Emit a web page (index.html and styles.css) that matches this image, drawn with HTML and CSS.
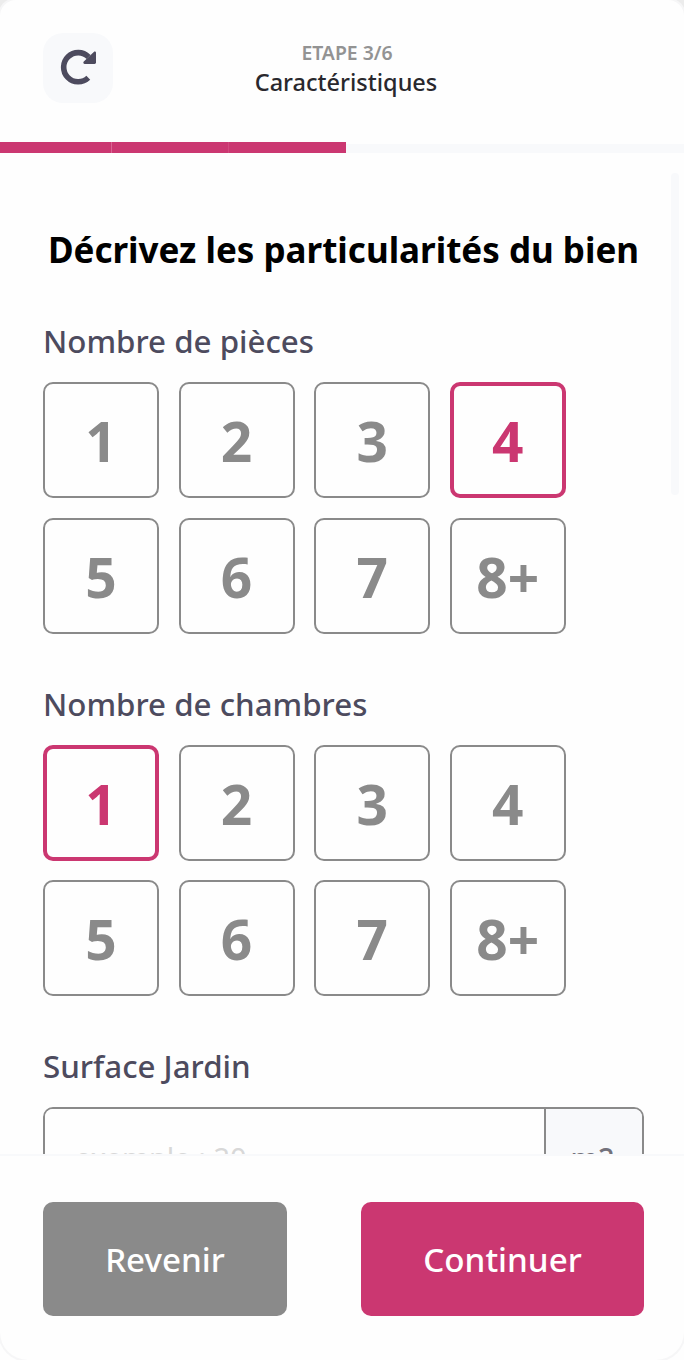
FILE: index.html
```html
<!DOCTYPE html>
<html lang="fr">
<head>
    <meta charset="UTF-8">
    <meta name="viewport" content="width=device-width, initial-scale=1.0">
    <title>Caractéristiques</title>
    <link rel="stylesheet" href="styles.css">
</head>
<body>

<div class="card">
    <header class="header">
        <button type="button" class="btn-reset" aria-label="Recommencer">
            <svg width="38" height="38" viewBox="0 0 38 38" fill="none">
                <path d="M29.3 28.8A14.6 14.6 0 1 1 29.6 7.9" stroke="#4d4b5e" stroke-width="5.6"/>
                <path d="M34.8 2.9c.8-.8 2.200-.3 2.200.9v9.800c0 .8-.6 1.400-1.400 1.400H25.800c-1.400 0-2-1.600-1-2.500z" fill="#4d4b5e"/>
            </svg>
        </button>
        <div class="step">
            <div class="step-count">ETAPE 3/6</div>
            <div class="step-name">Caractéristiques</div>
        </div>
    </header>

    <div class="progress">
        <div class="progress-step"></div>
        <div class="progress-step"></div>
        <div class="progress-step"></div>
        <div class="progress-rest"></div>
    </div>

    <main class="content">
        <form class="form">
            <h1 class="title">Décrivez les particularités du bien</h1>

            <div class="form-group">
                <div class="label">Nombre de pièces</div>
                <div class="choices">
                    <button type="button" class="choice">1</button>
                    <button type="button" class="choice">2</button>
                    <button type="button" class="choice">3</button>
                    <button type="button" class="choice selected">4</button>
                    <button type="button" class="choice">5</button>
                    <button type="button" class="choice">6</button>
                    <button type="button" class="choice">7</button>
                    <button type="button" class="choice">8+</button>
                </div>
            </div>

            <div class="form-group">
                <div class="label">Nombre de chambres</div>
                <div class="choices">
                    <button type="button" class="choice selected">1</button>
                    <button type="button" class="choice">2</button>
                    <button type="button" class="choice">3</button>
                    <button type="button" class="choice">4</button>
                    <button type="button" class="choice">5</button>
                    <button type="button" class="choice">6</button>
                    <button type="button" class="choice">7</button>
                    <button type="button" class="choice">8+</button>
                </div>
            </div>

            <div class="form-group">
                <label class="label" for="jardin">Surface Jardin</label>
                <div class="input-group">
                    <input type="text" id="jardin" class="input" placeholder="exemple : 20">
                    <span class="unit">m2</span>
                </div>
            </div>
        </form>
        <div class="scrollbar"></div>
    </main>

    <footer class="footer">
        <button type="button" class="btn btn-back">Revenir</button>
        <button type="button" class="btn btn-next">Continuer</button>
    </footer>
</div>

</body>
</html>
```
FILE: styles.css
```css
* {
    box-sizing: border-box;
}
body {
    margin: 0;
    background: linear-gradient(#ececec 50%, #fefefe 50%);
    font-family: "Noto Sans", sans-serif;
}
button {
    padding: 0;
    border: none;
    font-family: inherit;
    cursor: pointer;
}
.card {
    display: flex;
    flex-direction: column;
    height: 1360px;
    overflow: hidden;
    background-color: #fefefe;
    border-radius: 16px 16px 28px 28px;
    box-shadow: 0 0 0 2px #f6f6f7;
}

/* header */
.header {
    display: grid;
    grid-template-columns: 70px 1fr 70px;
    flex: none;
    height: 141px;
    padding: 33px 35px 0 43px;
}
.btn-reset {
    display: flex;
    align-items: center;
    justify-content: center;
    width: 70px;
    height: 70px;
    background-color: #f8f9fb;
    border-radius: 20px;
}
.step {
    padding-top: 7px;
    text-align: center;
}
.step-count {
    padding-left: 2px;
    font-size: 19.4px;
    line-height: 26px;
    font-weight: 600;
    color: #939393;
}
.step-name {
    font-size: 23.5px;
    line-height: 33px;
    font-weight: 500;
    color: #29282d;
}

/* progress bar */
.progress {
    display: flex;
    align-items: flex-end;
    flex: none;
    height: 12px;
}
.progress-step {
    width: 117px;
    height: 11.5px;
    background-color: #cb3771;
    border-left: 1px solid #d04a7e;
}
.progress-step:first-child {
    width: 111px;
    border-left: none;
}
.progress-step:nth-child(2) {
    border-left-color: #d96593;
}
.progress-step:nth-child(3) {
    width: 118px;
}
.progress-rest {
    flex: 1;
    height: 9px;
    background-color: #f8f9fb;
}

/* form */
.content {
    display: flex;
    flex: 1;
    min-height: 0;
    overflow: hidden;
}
.form {
    width: 671px;
    flex: none;
    padding: 73px 27px 0 43px;
}
.title {
    margin: 0 0 41px;
    font-size: 35px;
    line-height: 48px;
    font-weight: 700;
    text-align: center;
    white-space: nowrap;
    color: #000;
}
.form-group {
    margin-bottom: 44px;
}
.label {
    display: block;
    margin-bottom: 15px;
    font-size: 31.3px;
    line-height: 52px;
    font-weight: 500;
    color: #4d4b5e;
}
.choices {
    display: grid;
    grid-template-columns: repeat(4, 116px);
    gap: 19.6px;
}
.choice {
    height: 116px;
    padding-top: 1px;
    background-color: #fefefe;
    border: 2px solid #8a8a8a;
    border-radius: 10px;
    font-size: 55px;
    line-height: 1;
    font-weight: 700;
    color: #8a8a8a;
}
.choice.selected {
    border: 4px solid #cb3771;
    color: #cb3771;
}
.input-group {
    display: flex;
    height: 100px;
    overflow: hidden;
    border: 2px solid #8a8a8a;
    border-radius: 10px;
}
.input {
    flex: 1;
    min-width: 0;
    padding: 0 30px;
    background-color: #fefefe;
    border: none;
    font-family: inherit;
    font-size: 29px;
}
.input::placeholder {
    color: #d8d8d8;
}
.unit {
    display: flex;
    align-items: center;
    justify-content: center;
    width: 98px;
    padding-right: 3px;
    background-color: #f8f9fb;
    border-left: 2px solid #8a8a8a;
    font-size: 29px;
    font-weight: 500;
    color: #73727c;
}
.scrollbar {
    width: 8px;
    height: 322px;
    margin-top: 20px;
    background-color: #f8f9fb;
    border-radius: 4px;
}

/* footer */
.footer {
    display: flex;
    justify-content: space-between;
    flex: none;
    height: 206px;
    padding: 46px 40px 0 43px;
    border-top: 2px solid #f8f9fb;
}
.btn {
    height: 114px;
    padding-top: 1px;
    border-radius: 10px;
    font-size: 33.2px;
    font-weight: 500;
    color: #fff;
}
.btn-back {
    width: 244px;
    background-color: #8a8a8a;
}
.btn-next {
    width: 283px;
    background-color: #cb3771;
}
```
